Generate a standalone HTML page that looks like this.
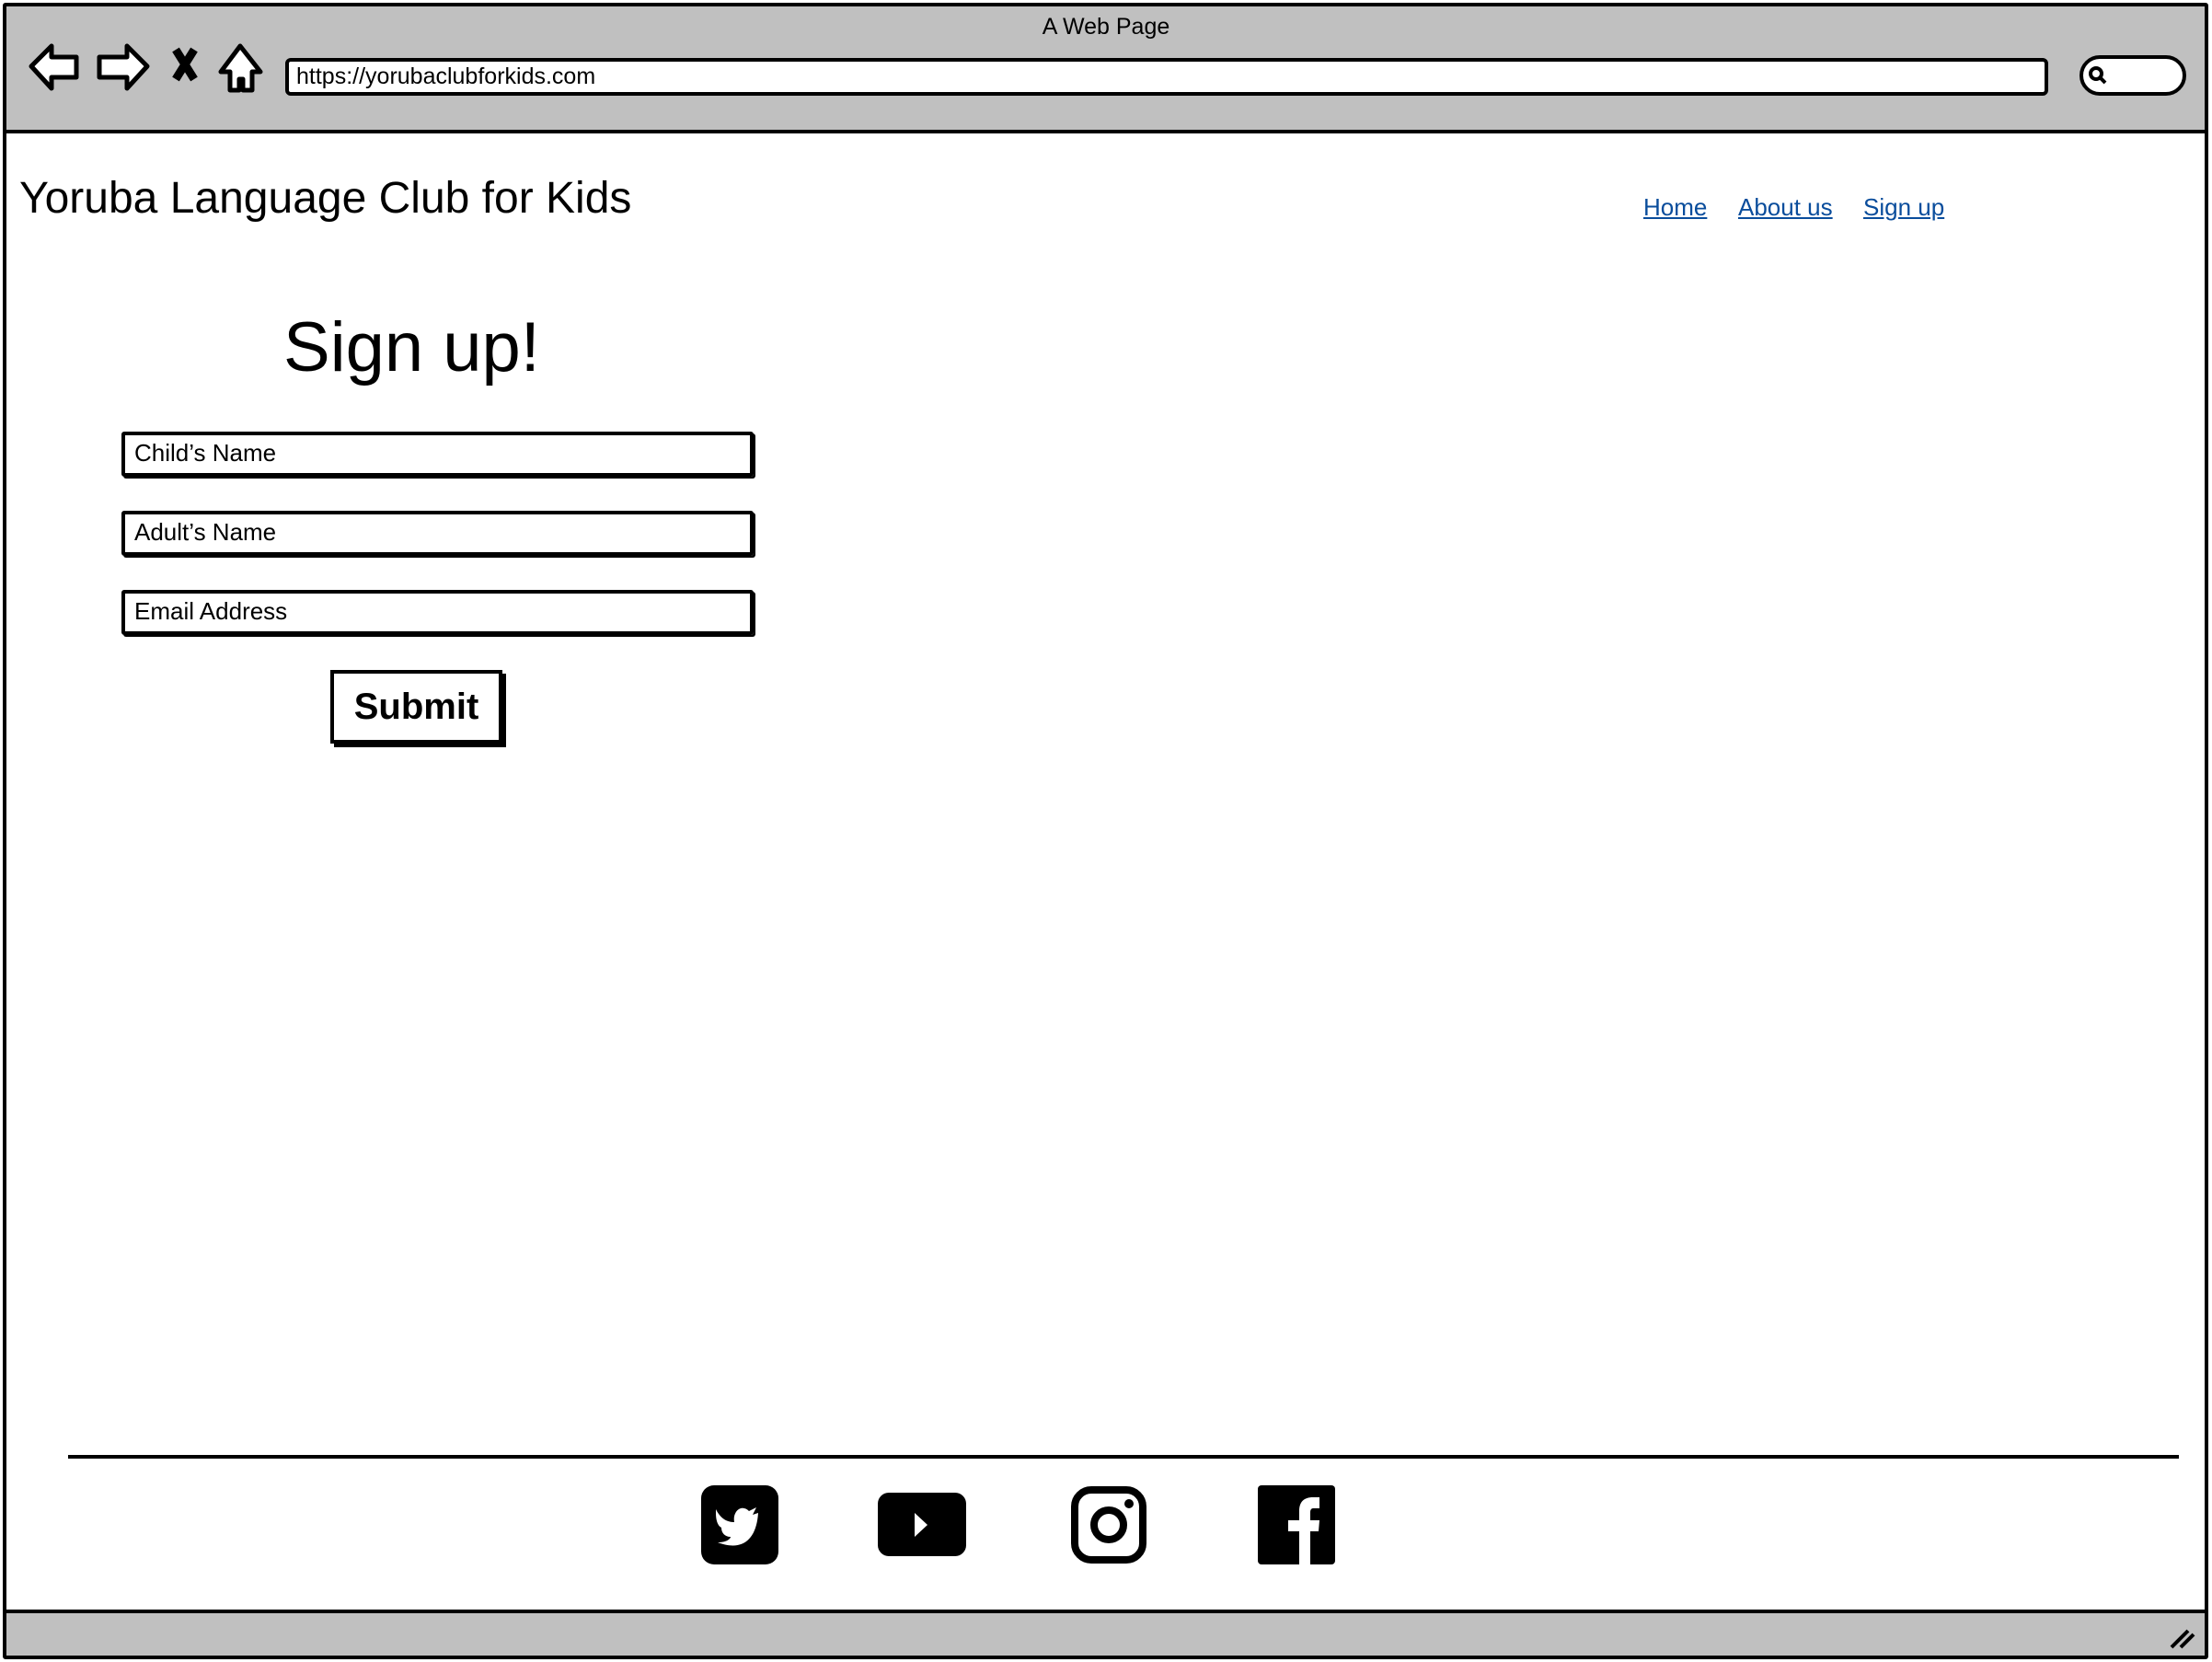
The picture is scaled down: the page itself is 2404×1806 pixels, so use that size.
<!DOCTYPE html>
<html><head><meta charset="utf-8"><style>
*{margin:0;padding:0;box-sizing:border-box}
body{width:2404px;height:1806px;background:#fff;position:relative;overflow:hidden;font-family:"Liberation Sans",sans-serif;color:#000}
.a{position:absolute}
.inp{position:absolute;left:132px;width:687px;height:49px;border:4px solid #000;border-radius:3px;font-size:26px;padding-left:10px;line-height:39px;box-shadow:2px 2px 0 #000}
.nav{position:absolute;top:210px;font-size:26px;color:#0a4d9c;text-decoration:underline}
</style></head><body>
<div class="a" style="left:3px;top:3px;width:2397px;height:1800px;border:4px solid #000;border-radius:3px"></div>
<div class="a" style="left:7px;top:7px;width:2389px;height:138px;background:#c0c0c0;border-bottom:4px solid #000"></div>
<div class="a" style="left:7px;top:1749px;width:2389px;height:50px;background:#c0c0c0;border-top:4px solid #000"></div>
<div class="a" style="left:0;width:2404px;top:15px;text-align:center;font-size:25px">A Web Page</div>
<svg class="a" style="left:28px;top:44px" width="270" height="60" viewBox="0 0 270 60">
<path d="M6 28 L28 6 L28 18 L55 18 L55 40 L28 40 L28 52 Z" fill="#fff" stroke="#000" stroke-width="5" stroke-linejoin="round"/>
<path d="M132 28 L110 6 L110 18 L80 18 L80 40 L110 40 L110 52 Z" fill="#fff" stroke="#000" stroke-width="5" stroke-linejoin="round"/>
<path d="M163 10 L183 42 M183 10 L163 42" stroke="#000" stroke-width="9"/>
<path d="M233 6 L212 34 L222 34 L222 54 L232 54 L232 42 L236 42 L236 54 L246 54 L246 34 L255 34 Z" fill="#fff" stroke="#000" stroke-width="5" stroke-linejoin="round"/>
</svg>
<div class="a" style="left:310px;top:63px;width:1916px;height:41px;background:#fff;border:4px solid #000;border-radius:6px;font-size:25px;padding-left:8px;line-height:32px">https://yorubaclubforkids.com</div>
<div class="a" style="left:2260px;top:60px;width:116px;height:44px;background:#fff;border:4px solid #000;border-radius:22px"></div>
<svg class="a" style="left:2268px;top:70px" width="24" height="24"><circle cx="10" cy="10" r="6" fill="none" stroke="#000" stroke-width="4"/><path d="M14 14 L20 20" stroke="#000" stroke-width="4"/></svg>
<div class="a" style="left:21px;top:188px;font-size:48px">Yoruba Language Club for Kids</div>
<div class="nav" style="left:1786px">Home</div>
<div class="nav" style="left:1889px">About us</div>
<div class="nav" style="left:2025px">Sign up</div>
<div class="a" style="left:308px;top:334px;font-size:76px">Sign up!</div>
<div class="inp" style="top:469px">Child’s Name</div>
<div class="inp" style="top:555px">Adult’s Name</div>
<div class="inp" style="top:641px">Email Address</div>
<div class="a" style="left:359px;top:728px;width:187px;height:80px;border:4px solid #000;box-shadow:4px 4px 0 #000;font-size:40px;font-weight:bold;text-align:center;line-height:72px">Submit</div>
<div class="a" style="left:74px;top:1581px;width:2294px;height:4px;background:#000"></div>
<svg class="a" style="left:762px;top:1614px" width="84" height="86" viewBox="0 0 84 86"><rect width="84" height="86" rx="14" fill="#000"/><path d="M16 26 C22 38 30 40 36 40 C34 28 44 20 52 28 L60 24 L56 32 L62 30 C60 60 44 72 18 62 C28 62 32 58 32 56 C26 56 22 52 22 46 C18 44 16 38 16 30 Z" fill="#fff"/></svg>
<svg class="a" style="left:954px;top:1622px" width="96" height="69"><rect width="96" height="69" rx="12" fill="#000"/><path d="M40 22 L54 35 L40 48 Z" fill="#fff"/></svg>
<svg class="a" style="left:1163px;top:1614px" width="84" height="86"><rect x="5" y="5" width="74" height="76" rx="18" fill="none" stroke="#000" stroke-width="8"/><circle cx="42" cy="43" r="16" fill="none" stroke="#000" stroke-width="8"/><circle cx="64" cy="20" r="5" fill="#000"/></svg>
<svg class="a" style="left:1367px;top:1614px" width="84" height="86"><rect width="84" height="86" rx="4" fill="#000"/><path d="M45 86 L45 50 L33 50 L33 38 L45 38 L45 28 C45 18 50 13 60 13 L67 13 L67 25 L60 25 C58 25 57 27 57 29 L57 38 L67 38 L66 50 L57 50 L57 86 Z" fill="#fff"/></svg>
<svg class="a" style="left:2356px;top:1766px" width="30" height="28"><path d="M4 24 L22 6 M14 24 L28 10" stroke="#000" stroke-width="4"/></svg>
</body></html>
